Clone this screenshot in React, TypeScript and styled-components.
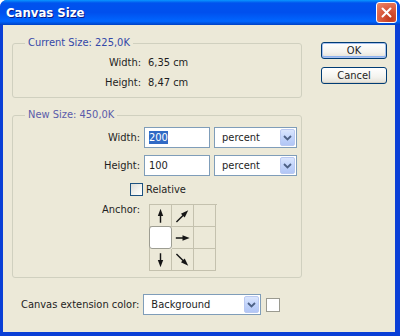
import styled, { createGlobalStyle } from 'styled-components'

const GlobalStyle = createGlobalStyle`
  html, body {
    margin: 0;
    padding: 0;
  }

  body {
    width: 400px;
    height: 336px;
    overflow: hidden;
    font-family: "DejaVu Sans Condensed", "Liberation Sans", sans-serif;
    font-size: 11px;
    color: #1e1e1e;
  }
`

type Dir = 'up' | 'upRight' | 'right' | 'down' | 'downRight'

const angles: Record<Dir, number> = {
  up: 0,
  upRight: 45,
  right: 90,
  down: 180,
  downRight: 135
}

// anchor cells, row by row; null = empty, 'center' = the chosen anchor
const anchorCells: (Dir | 'center' | null)[] = [
  'up', 'upRight', null,
  'center', 'right', null,
  'down', 'downRight', null
]

function Arrow ({ dir }: { dir: Dir }) {
  const long = dir === 'upRight' || dir === 'downRight'
  return (
    <svg width="22" height="22" viewBox="0 0 22 22">
      <g transform={`rotate(${angles[dir]} 11 11)`}>
        <line x1="11" y1={long ? 20 : 18} x2="11" y2="8" stroke="#151515" strokeWidth="1.5" />
        <polygon points={long ? '11,2.5 8.2,10.5 13.8,10.5' : '11,3.5 8.2,11 13.8,11'} fill="#151515" />
      </g>
    </svg>
  )
}

function Select ({ value, width }: { value: string, width: number }) {
  return (
    <SelectBox $width={width}>
      <span>{value}</span>
      <DropButton>
        <svg width="9" height="6" viewBox="0 0 9 6">
          <polyline points="1,1 4.5,4.5 8,1" fill="none" stroke="#4d6185" strokeWidth="1.8" />
        </svg>
      </DropButton>
    </SelectBox>
  )
}

export default function App () {
  return (
    <>
      <GlobalStyle />
      <Window>
        <TitleBar>
          <Title>Canvas Size</Title>
          <CloseButton>
            <svg width="11" height="11" viewBox="0 0 11 11">
              <path d="M1.5 1.5 L9.5 9.5 M9.5 1.5 L1.5 9.5" stroke="#fff" strokeWidth="2" strokeLinecap="round" />
            </svg>
          </CloseButton>
        </TitleBar>

        <Body>
          <LeftColumn>
            <Group>
              <Legend $tone="#3448a8">Current Size: 225,0K</Legend>
              <InfoGrid>
                <Label>Width:</Label>
                <span>6,35 cm</span>
                <Label>Height:</Label>
                <span>8,47 cm</span>
              </InfoGrid>
            </Group>

            <Group $gap={10}>
              <Legend $tone="#5b5caa">New Size: 450,0K</Legend>
              <FormGrid>
                <Label>Width:</Label>
                <TextBox><Selected>200</Selected></TextBox>
                <Select value="percent" width={83} />

                <Label>Height:</Label>
                <TextBox>100</TextBox>
                <Select value="percent" width={83} />
              </FormGrid>

              <CheckRow>
                <CheckBox />
                <span>Relative</span>
              </CheckRow>

              <AnchorRow>
                <Label>Anchor:</Label>
                <AnchorGrid>
                  {anchorCells.map((cell, i) => (
                    <AnchorCell key={i} $active={cell === 'center'}>
                      {cell && cell !== 'center' && <Arrow dir={cell} />}
                    </AnchorCell>
                  ))}
                </AnchorGrid>
              </AnchorRow>
            </Group>

            <ExtensionRow>
              <span>Canvas extension color:</span>
              <Select value="Background" width={118} />
              <Swatch />
            </ExtensionRow>
          </LeftColumn>

          <ButtonColumn>
            <Button $default>OK</Button>
            <Button>Cancel</Button>
          </ButtonColumn>
        </Body>
      </Window>
    </>
  )
}

const Window = styled.div`
  width: 400px;
  height: 336px;
  display: flex;
  flex-direction: column;
  background: #0a3fd6;
  border-radius: 7px 7px 0 0;
  overflow: hidden;
`

const TitleBar = styled.div`
  height: 25px;
  flex-shrink: 0;
  display: flex;
  align-items: center;
  justify-content: space-between;
  padding: 0 3px 0 6px;
  background: linear-gradient(180deg, #0997ff 0%, #0053ee 12%, #0050ee 50%, #0066ff 85%, #0041c4 100%);
`

const Title = styled.span`
  color: #fff;
  font-family: "DejaVu Sans Condensed", "Liberation Sans", sans-serif;
  font-weight: bold;
  font-size: 13px;
  text-shadow: 1px 1px 0 #0a1883;
`

const CloseButton = styled.div`
  width: 19px;
  height: 19px;
  display: flex;
  align-items: center;
  justify-content: center;
  border: 1px solid #fff;
  border-radius: 3px;
  background: radial-gradient(circle at 70% 80%, #c1381b 0%, #dd6144 55%, #ec8b6e 100%);
`

const Body = styled.div`
  flex: 1;
  display: flex;
  margin: 0 5px 4px 3px;
  padding: 11px 0 0 9px;
  background: #ece9d8;
`

const LeftColumn = styled.div`
  width: 290px;
  display: flex;
  flex-direction: column;
`

const Group = styled.fieldset<{ $gap?: number }>`
  margin: ${p => p.$gap ?? 0}px 0 0;
  padding: 0;
  border: 1px solid #d0d0bf;
  border-radius: 3px;
  min-width: 0;
`

const Legend = styled.legend<{ $tone: string }>`
  margin-left: 12px;
  padding: 0 3px;
  line-height: 14px;
  color: ${p => p.$tone};
`

const Label = styled.span`
  text-align: right;
`

const InfoGrid = styled.div`
  display: grid;
  grid-template-columns: 128px 1fr;
  grid-auto-rows: 20px;
  align-items: center;
  column-gap: 7px;
  padding: 2px 0 5px;
`

const FormGrid = styled.div`
  display: grid;
  grid-template-columns: 127px 66px 83px;
  grid-auto-rows: 21px;
  align-items: center;
  column-gap: 4px;
  row-gap: 7px;
  padding-top: 5px;
`

const TextBox = styled.div`
  height: 21px;
  box-sizing: border-box;
  display: flex;
  align-items: center;
  padding-left: 4px;
  border: 1px solid #7f9db9;
  background: #fff;
`

const Selected = styled.span`
  background: #316ac5;
  color: #fff;
  line-height: 13px;
`

const SelectBox = styled.div<{ $width: number }>`
  width: ${p => p.$width}px;
  height: 21px;
  box-sizing: border-box;
  display: flex;
  align-items: center;
  justify-content: space-between;
  padding: 1px 1px 1px 7px;
  border: 1px solid #7f9db9;
  background: #fff;
`

const DropButton = styled.div`
  width: 15px;
  height: 17px;
  box-sizing: border-box;
  display: flex;
  align-items: center;
  justify-content: center;
  border: 1px solid #bac9f1;
  border-radius: 2px;
  background: linear-gradient(180deg, #dbe6fd 0%, #c2d4fb 50%, #b2c6f5 100%);
`

const CheckRow = styled.div`
  display: flex;
  align-items: center;
  gap: 3px;
  margin-top: 7px;
  padding-left: 117px;
  height: 13px;
`

const CheckBox = styled.div`
  width: 13px;
  height: 13px;
  box-sizing: border-box;
  border: 1px solid #1c5180;
  background: linear-gradient(135deg, #dcdcd7 0%, #f4f4f0 60%, #fff 100%);
`

const AnchorRow = styled.div`
  display: grid;
  grid-template-columns: 127px auto;
  column-gap: 9px;
  align-items: start;
  margin-top: 7px;
  padding-bottom: 6px;
`

const AnchorGrid = styled.div`
  width: 67px;
  display: grid;
  grid-template-columns: repeat(3, 22px);
  grid-auto-rows: 22px;
  border-top: 1px solid #c4c1ae;
  border-left: 1px solid #c4c1ae;
  margin-top: 1px;
`

const AnchorCell = styled.div<{ $active?: boolean }>`
  display: flex;
  align-items: center;
  justify-content: center;
  border-right: 1px solid #c4c1ae;
  border-bottom: 1px solid #c4c1ae;
  ${p => p.$active && `
    background: #fff;
    border: 1px solid #9d9d92;
    border-radius: 3px;
    margin: -1px 0 0 -1px;
  `}
`

const ExtensionRow = styled.div`
  display: flex;
  align-items: center;
  gap: 4px;
  margin-top: 16px;
  padding-left: 9px;

  > div:last-child {
    margin-left: 1px;
  }
`

const Swatch = styled.div`
  width: 14px;
  height: 14px;
  box-sizing: border-box;
  border: 1px solid #9a9a90;
  background: #fff;
`

const ButtonColumn = styled.div`
  display: flex;
  flex-direction: column;
  gap: 8px;
  margin-left: 19px;
  padding-top: 6px;
`

const Button = styled.div<{ $default?: boolean }>`
  width: 66px;
  height: 17px;
  box-sizing: border-box;
  display: flex;
  align-items: center;
  justify-content: center;
  border: 1px solid #003c74;
  border-radius: 3px;
  background: linear-gradient(180deg, #fff 0%, #f4f3ee 60%, #e3e0d6 100%);
  box-shadow: ${p => p.$default ? 'inset 0 0 0 1px #a8c1ef, inset 0 -1px 0 1px #8db2f0' : 'inset 0 -1px 0 #d6d0c5'};
`
